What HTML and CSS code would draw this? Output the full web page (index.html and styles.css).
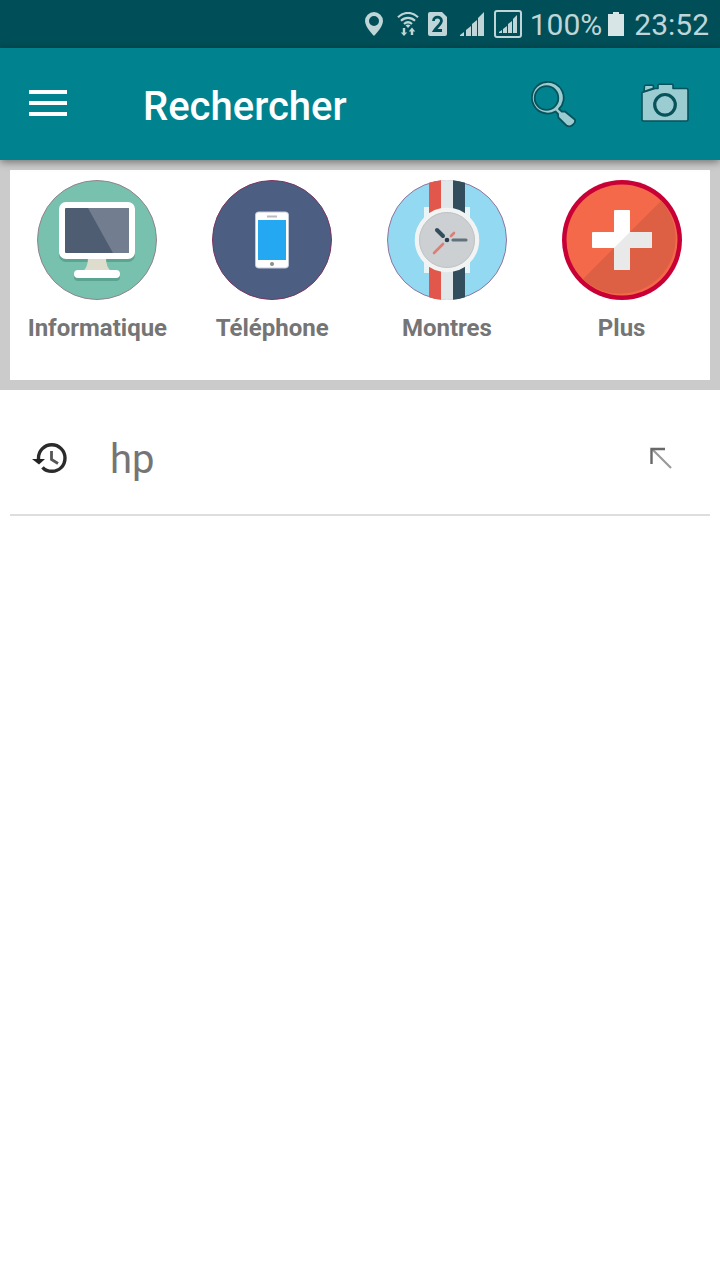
FILE: index.html
```html
<!DOCTYPE html>
<html lang="fr">
<head>
<meta charset="utf-8">
<meta name="viewport" content="width=device-width, initial-scale=1">
<title>Rechercher</title>
<link rel="stylesheet" href="styles.css">
</head>
<body>
<div class="status">
  <svg class="status-pin" width="18" height="24" viewBox="0 0 18 24" fill="#bfd5d8" aria-hidden="true"><path fill-rule="evenodd" d="M9 0a9 9 0 0 0-9 9c0 6 9 15 9 15s9-9 9-15a9 9 0 0 0-9-9zm0 4a5 5 0 1 1 0 10 5 5 0 0 1 0-10z"/></svg>
  <svg class="status-wifi" width="22" height="24" viewBox="0 0 22 24" fill="none" stroke="#bfd5d8" stroke-width="2.200" aria-hidden="true"><path d="M1 5.200C7-.5 15-.5 21 5.200M4 8.800c4-4 10-4 14 0M7 12c2.500-2.200 5.500-2.200 8 0"/><path fill="#bfd5d8" stroke="none" d="M8.500 13.200q2.500-1.500 5 0L11 16zM5.800 16h2.400v4.500h2L7 24l-3.200-3.500h2zM13.800 23h2.400v-3.500h2L15 15.500l-3.200 4h2z"/></svg>
  <svg class="status-sim" width="19" height="24" viewBox="0 0 19 24" aria-hidden="true"><path fill="#bfd5d8" d="M2 0h12l5 5v17q0 2-2 2H2q-2 0-2-2V2q0-2 2-2z"/><path d="M5.500 9c0-5 8-5 8-.3 0 3-4.500 6-7 9.800H14" fill="none" stroke="#004f58" stroke-width="2.800"/></svg>
  <svg class="status-signal" width="24" height="24" viewBox="0 0 24 24" fill="#bfd5d8" aria-hidden="true"><path d="M0 24v-1l4-3v4zM6 24v-6l5-4v10zM12 24V12l5-4v16zM18 24V6l6-6v24z"/></svg>
  <svg class="status-signal2" width="28" height="28" viewBox="0 0 28 28" fill="#bfd5d8" aria-hidden="true"><rect x="1" y="1" width="26" height="26" rx="2" fill="none" stroke="#bfd5d8" stroke-width="2"/><path d="M5 23v-1l3-2v3zM9 23v-4l4-3v7zM14 23v-9l4-3v12zM19 23V9l4-4v18z"/></svg>
  <span class="status-text">100%</span>
  <svg class="status-battery" width="16" height="24" viewBox="0 0 16 24" fill="#d8e5e7" aria-hidden="true"><path d="M5 0h6v2h5v22H0V2h5z"/></svg>
  <span class="status-text">23:52</span>
</div>

<header class="bar">
  <button class="bar-button menu" type="button" aria-label="Menu">
    <svg width="38" height="28" viewBox="0 0 38 28" fill="#fff"><path d="M0 0h38v4H0zM0 11h38v4H0zM0 22h38v4H0z"/></svg>
  </button>
  <h1 class="title">Rechercher</h1>
  <button class="bar-button" type="button" aria-label="Rechercher">
    <svg width="48" height="48" viewBox="-1 -1 48 48" fill="#9accd1" stroke="#07525b" stroke-width="1.800" stroke-linejoin="round"><path fill-rule="evenodd" d="M16.500 1a15.800 15.800 0 1 0 9 29.500l2.500 2.500.3 3.500 8.500 8.300q3 1.500 5.800-.8 3.500-2.800 2.200-5.500L35 30.500l-3.200.2-2.800-2.700A15.800 15.800 0 0 0 16.500 1zm0 4.200a11.800 11.800 0 1 1 0 23.600 11.800 11.800 0 0 1 0-23.600z"/></svg>
  </button>
  <button class="bar-button" type="button" aria-label="Photo">
    <svg width="48" height="48" viewBox="0 -2 48 48" fill="#9accd1" stroke="#07525b" stroke-width="1.600" stroke-linejoin="round"><path d="M1 10.500v27q0 1.500 1.500 1.500h43q1.500 0 1.500-1.500V8q0-1.500-1.500-1.500H32V3q0-.8-1-.8H18q-1 0-1 .8v3.500h-3z"/><path d="M3 9.500l.5-5.500q0-.8 1-.8h6.800q1.200 0 1 .8l.2 2.200z"/><circle cx="24" cy="22.800" r="10.300" stroke-width="3.200"/></svg>
  </button>
</header>

<main>
  <nav class="panel" aria-label="Catégories">
    <a class="category" href="#informatique">
      <svg width="120" height="120" viewBox="0 0 120 120" aria-hidden="true">
        <circle cx="60" cy="60" r="59.500" fill="#77c1ae" stroke="#92848c"/>
        <rect x="22" y="25" width="76" height="57" rx="7" fill="#5ba491"/>
        <path d="M51 78h18q0 9 5 13H46q5-4 5-13z" fill="#deddcd"/>
        <rect x="37" y="92" width="46" height="9" rx="4" fill="#5ba491"/>
        <rect x="37" y="90" width="46" height="8" rx="4" fill="#fff"/>
        <rect x="22" y="22" width="76" height="57" rx="7" fill="#fff"/>
        <rect x="28" y="28" width="64" height="45" rx="1" fill="#4f5d73"/>
        <path d="M51 28h40q1 0 1 1v43q0 1-1 1H76z" fill="#727d8f"/>
      </svg>
      <span class="caption">Informatique</span>
    </a>
    <a class="category" href="#telephone">
      <svg width="120" height="120" viewBox="0 0 120 120" aria-hidden="true">
        <circle cx="60" cy="60" r="59.500" fill="#4c5f82" stroke="#7b3563"/>
        <rect x="43.500" y="32" width="33" height="56" rx="3" fill="#fff" stroke="#c3cad7"/>
        <rect x="46" y="40" width="28" height="40" fill="#24a8f2"/>
        <path d="M55 36.500h10" stroke="#bbb" stroke-width="2"/>
        <circle cx="60" cy="84" r="2" fill="#8c8c8c"/>
      </svg>
      <span class="caption">Téléphone</span>
    </a>
    <a class="category" href="#montres">
      <svg width="120" height="120" viewBox="0 0 120 120" aria-hidden="true">
        <defs><clipPath id="disc"><circle cx="60" cy="60" r="60"/></clipPath></defs>
        <circle cx="60" cy="60" r="59.500" fill="#92d9f1" stroke="#92739f"/>
        <g clip-path="url(#disc)">
          <path d="M42 0h12v120H42z" fill="#e2574c"/><path d="M54 0h12v120H54z" fill="#e1e6e8"/><path d="M66 0h12v120H66z" fill="#324d5b"/>
        </g>
        <path d="M37 27h5v13h-5zM78 27h5v13h-5zM37 80h5v13h-5zM78 80h5v13h-5z" fill="#e9f4f7"/>
        <circle cx="60" cy="60" r="30" fill="#cdd0d3" stroke="#f2f4f4" stroke-width="4.500"/>
        <circle cx="60" cy="60" r="27.500" fill="none" stroke="#bfc3c6" stroke-width="1"/>
        <path d="M50 50l6 6" stroke="#324d5b" stroke-width="4" stroke-linecap="round"/>
        <path d="M66 60h13" stroke="#60737d" stroke-width="3.200" stroke-linecap="round"/>
        <path d="M47 73l9-9M64 56l3-3" stroke="#df7c74" stroke-width="2.600" stroke-linecap="round"/>
        <circle cx="60" cy="60" r="2.300" fill="#28404d"/>
      </svg>
      <span class="caption">Montres</span>
    </a>
    <a class="category" href="#plus">
      <svg width="120" height="120" viewBox="0 0 120 120" aria-hidden="true">
        <circle cx="60" cy="60" r="60" fill="#c80036"/>
        <circle cx="60" cy="60" r="55.500" fill="#f4694a"/>
        <path d="M99.200 20.800a55.500 55.500 0 0 1-78.400 78.400z" fill="#de6044"/>
        <path d="M53 30h14q1 0 1 1v21h21q1 0 1 1v14q0 1-1 1H68v21q0 1-1 1H53q-1 0-1-1V68H31q-1 0-1-1V53q0-1 1-1h21V31q0-1 1-1z" fill="#fff"/>
        <path d="M68 52h21q1 0 1 1v14q0 1-1 1H68v21q0 1-1 1H53q-1 0-1-1V68z" fill="#e9e9e9"/>
      </svg>
      <span class="caption">Plus</span>
    </a>
  </nav>

  <ul class="history">
    <li class="entry">
      <svg width="36" height="36" viewBox="0 0 36 36" aria-hidden="true" fill="none" stroke="#2b2b2b" stroke-width="3.400"><path d="M6.500 18v-2A13.200 13.200 0 0 1 33 16C33 24 27 29.300 20 29.300c-4 0-7-1-9.500-4"/><path d="M0 17h13L7 22.500z" fill="#222" stroke="none"/><path d="M19.500 9v8.500l6.500 4" stroke="#555" stroke-width="2.800"/></svg>
      <a class="term" href="#hp">hp</a>
      <button class="fill" type="button" aria-label="Reprendre hp">
        <svg width="24" height="28" viewBox="0 0 24 28" fill="none"><path d="M3 3l19 19" stroke="#999" stroke-width="2.200"/><path d="M2.500 18V3H16" stroke="#686868" stroke-width="2.400"/></svg>
      </button>
    </li>
  </ul>
</main>
</body>
</html>
```
FILE: styles.css
```css
* {
  box-sizing: border-box;
}

body {
  margin: 0;
  background: #fff;
  color: #757575;
  font-family: Roboto, "Liberation Sans", sans-serif;
}

svg {
  display: block;
  flex: none;
}

a {
  color: inherit;
  text-decoration: none;
}

button {
  display: flex;
  border: 0;
  padding: 0;
  background: none;
  cursor: pointer;
}

.status {
  display: flex;
  align-items: center;
  justify-content: flex-end;
  height: 48px;
  padding-right: 11px;
  background: #004f58;
  color: #bfd5d8;
}

.status-text {
  padding-top: 2px;
  font-size: 30px;
  line-height: 46px;
}

.status-pin {
  margin-right: 14px;
}

.status-wifi {
  margin-right: 9px;
}

.status-sim {
  margin-right: 13px;
}

.status-signal {
  margin-right: 10px;
}

.status-signal2 {
  margin-right: 8px;
}

.status-battery {
  margin: 0 10px 0 6px;
}

.bar {
  position: relative;
  display: flex;
  align-items: center;
  gap: 64px;
  height: 112px;
  padding: 0 31px 0 29px;
  background: #00838f;
  box-shadow: 0 2px 8px rgba(0, 0, 0, 0.45);
}

.bar-button {
  align-items: center;
}

.menu {
  margin-right: 12px;
}

.title {
  flex: 1;
  margin: 0;
  padding-top: 6px;
  color: #fff;
  font-size: 40px;
  font-weight: 500;
  line-height: 48px;
}

.panel {
  display: grid;
  grid-template-columns: repeat(4, 1fr);
  border: 10px solid #cbcbcb;
  padding: 10px 1px 36px 0;
}

.category {
  display: flex;
  flex-direction: column;
  align-items: center;
  gap: 12px;
}

.caption {
  font-size: 24px;
  font-weight: 700;
  line-height: 32px;
}

.history {
  margin: 0;
  padding: 0 10px;
  list-style: none;
}

.entry {
  display: flex;
  align-items: center;
  padding: 37px 37px 21px 22px;
  border-bottom: 2px solid #dedede;
}

.term {
  flex: 1;
  padding-left: 42px;
  font-size: 40px;
  line-height: 66px;
}
```
